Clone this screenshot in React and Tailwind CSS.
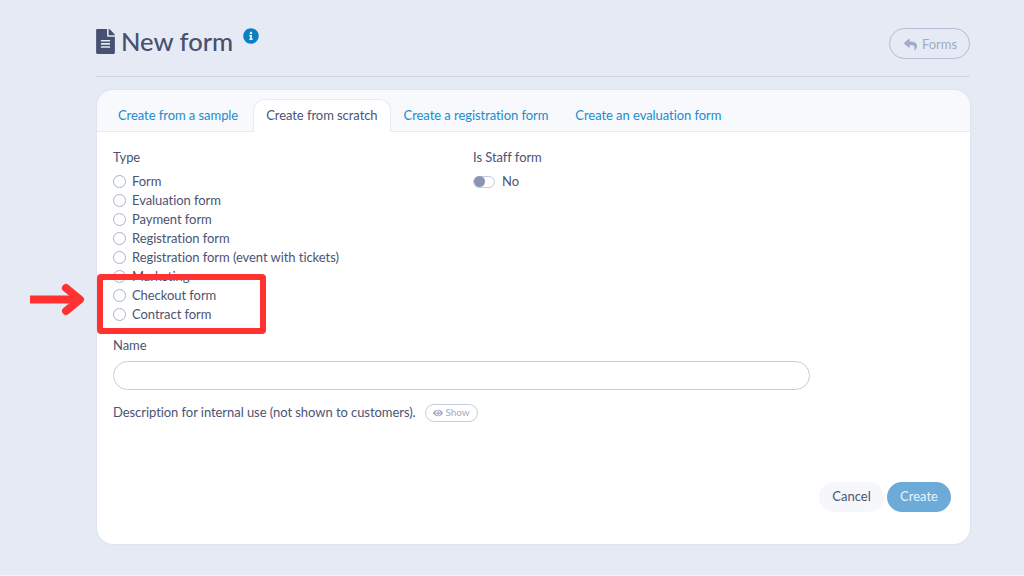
import React from 'react';
import { FaFileAlt, FaInfoCircle, FaReply, FaEye } from 'react-icons/fa';

const types = [
    'Form',
    'Evaluation form',
    'Payment form',
    'Registration form',
    'Registration form (event with tickets)',
    'Marketing',
    'Checkout form',
    'Contract form',
];

const tabs = [
    { name: 'Create from a sample', extra: 'pr-[14px]' },
    { name: 'Create from scratch', active: true },
    { name: 'Create a registration form' },
    { name: 'Create an evaluation form', extra: 'ml-[1px]' },
];

const App = () => {
    return (
        <div className="relative h-[576px] w-[1024px] overflow-hidden border-b border-[#f1f3f9] bg-[#e6eaf4] font-['Lato','Open_Sans',sans-serif] text-[#4a5474]">
            <div className="ml-[96px] w-[874px]">
                {/* page header */}
                <div className="flex h-[77px] items-start justify-between border-b border-[#cfd5e4]">
                    <div className="flex items-start pt-[27px]">
                        <FaFileAlt className="-ml-[3px] mt-[2px] text-[#465170]" size={25} />
                        <h1 className="ml-[3px] text-[25.5px] font-medium leading-[28px] text-[#465170]">New form</h1>
                        <FaInfoCircle className="ml-[10px] mt-[1px] text-[#0a7fc2]" size={16} />
                    </div>
                    <div className="mt-[28px] flex h-[31px] w-[81px] items-center justify-center gap-[5px] rounded-full border border-[#b4bdd4] pl-[2px] pt-[2px] text-[13px] text-[#a0abc6]">
                        <FaReply size={13} />
                        <span>Forms</span>
                    </div>
                </div>

                {/* card */}
                <div className="ml-[1px] mt-[13px] flex h-[454px] w-[873px] flex-col overflow-hidden rounded-[16px] bg-white shadow-[0_0_2px_rgba(100,115,160,0.2)]">
                    <div className="flex h-[42px] items-end border-b border-[#e6eaf4] bg-[#f7f9fd] pl-[8px]">
                        {tabs.map((tab) => (
                            <div
                                key={tab.name}
                                className={`-mb-px flex h-[33px] items-center rounded-t-[12px] border-x border-t px-[12px] text-[13px] tracking-[-0.06px] ${tab.active ? 'border-[#e6eaf4] bg-white text-[#4a5474]' : 'border-transparent text-[#1b8ccb]'} ${tab.extra || ''}`}
                            >
                                {tab.name}
                            </div>
                        ))}
                    </div>

                    <div className="flex flex-1 flex-col px-[16px]">
                        <div className="flex pt-[16px]">
                            <div className="w-[360px]">
                                <div className="text-[13px] leading-[18px] tracking-[-0.06px]">Type</div>
                                <div className="mt-[6px] flex flex-col">
                                    {types.map((type) => (
                                        <div key={type} className="flex h-[19px] items-center gap-[6px] text-[13px] tracking-[-0.06px]">
                                            <span className="h-[13px] w-[13px] rounded-full border border-[#a9b2c9] bg-white" />
                                            <span>{type}</span>
                                        </div>
                                    ))}
                                </div>
                            </div>
                            <div>
                                <div className="text-[13px] leading-[18px] tracking-[-0.06px]">Is Staff form</div>
                                <div className="mt-[6px] flex h-[19px] items-center gap-[7px] text-[13px]">
                                    <span className="flex h-[12px] w-[22px] items-center rounded-full border border-[#c5cce0] bg-white">
                                        <span className="h-[11px] w-[11px] rounded-full bg-[#8a95b5]" />
                                    </span>
                                    <span>No</span>
                                </div>
                            </div>
                        </div>

                        <div className="mt-[12px] text-[13px] leading-[18px] tracking-[-0.06px]">Name</div>
                        <div className="mt-[7px] h-[29px] w-[697px] rounded-full border border-[#c5cce0] bg-white" />

                        <div className="mt-[13px] flex items-center text-[13px] tracking-[-0.06px]">
                            <span>Description for internal use (not shown to customers).</span>
                            <span className="ml-[9px] flex h-[18px] w-[53px] items-center justify-center gap-[3px] rounded-full border border-[#c5cce0] text-[10px] text-[#a0abc6]">
                                <FaEye size={10} />
                                Show
                            </span>
                        </div>

                        <div className="mb-[32px] mr-[3px] mt-auto flex justify-end gap-[3px] text-[13px]">
                            <div className="flex h-[30px] w-[65px] items-center justify-center rounded-full bg-[#f6f7fa]">Cancel</div>
                            <div className="flex h-[30px] w-[64px] items-center justify-center rounded-full bg-[#6cabd8] text-[#e9f3fa]">Create</div>
                        </div>
                    </div>
                </div>
            </div>

            {/* annotation on top of the screenshot */}
            <div className="absolute left-[97px] top-[274px] h-[60px] w-[169px] rounded-[4px] border-[6px] border-[#ff3131]" />
            <svg className="absolute left-[30px] top-[283px]" width="56" height="34" viewBox="0 0 56 34" fill="none">
                <path d="M0 16.5H48" stroke="#ff3131" strokeWidth="8" />
                <path d="M36 5L50 16.5L36 28" stroke="#ff3131" strokeWidth="8" strokeLinejoin="round" strokeLinecap="round" />
            </svg>
        </div>
    );
};

export default App;
